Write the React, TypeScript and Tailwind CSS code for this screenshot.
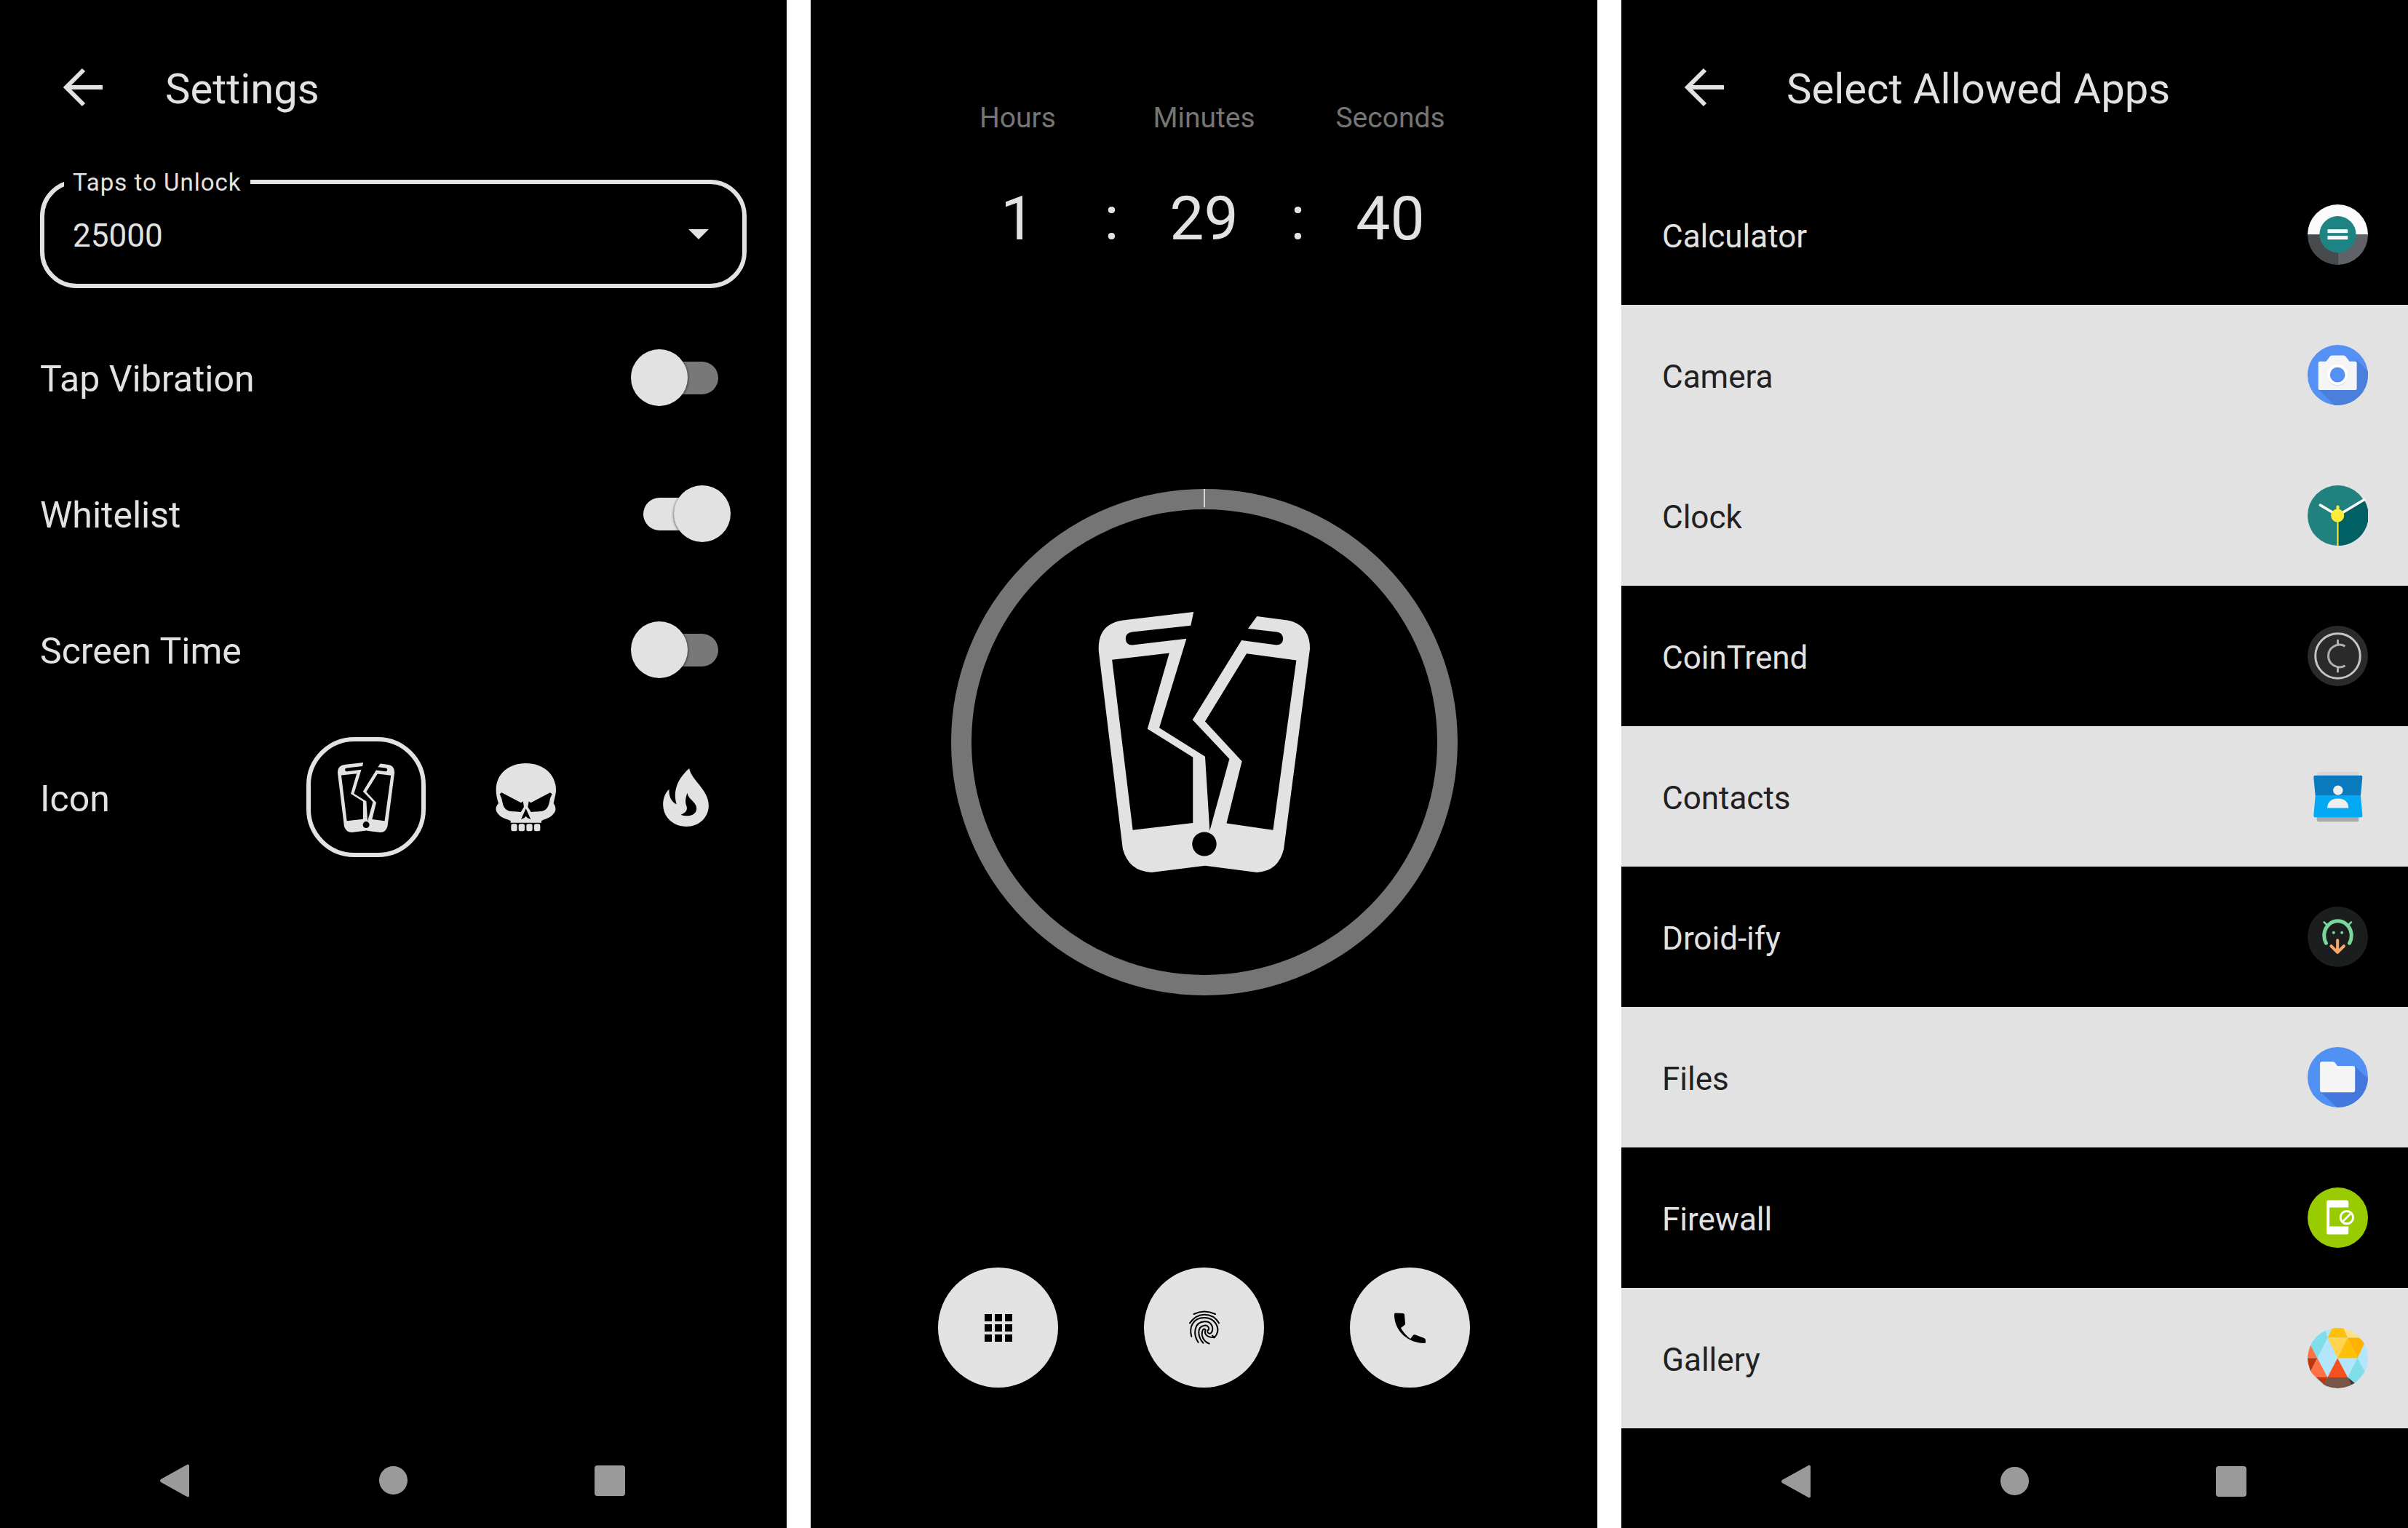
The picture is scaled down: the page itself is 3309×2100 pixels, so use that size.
import React from "react";

const font = { fontFamily: "Roboto, sans-serif" };

function BackArrow() {
  return (
    <svg width="54" height="54" viewBox="0 0 54 54" className="shrink-0">
      <path d="M54 27H7M28 3L4 27l24 24" fill="none" stroke="#e2e2e2" strokeWidth="6" />
    </svg>
  );
}

function NavBar() {
  return (
    <div className="h-[138px] relative">
      <div className="flex items-center h-[45px] mt-[50px]">
        <svg width="40" height="46" viewBox="0 0 40 46" className="ml-[220px] shrink-0">
          <path d="M38 0.5q2 0 2 2v41q0 2-2 2L1 25q-2-2 0-4z" fill="#9a9a9a" />
        </svg>
        <div className="ml-[261px] w-[39px] h-[39px] rounded-full bg-[#9a9a9a] shrink-0" />
        <div className="ml-[257px] w-[42px] h-[42px] rounded-[4px] bg-[#9a9a9a] shrink-0" />
      </div>
    </div>
  );
}

function Toggle({ on }: { on?: boolean }) {
  return (
    <div className={on ? "relative w-[120px] h-[78px] mr-[72px]" : "relative w-[120px] h-[78px] mr-[89px]"}>
      <div className={on ? "absolute left-0 top-[17px] w-[92px] h-[45px] rounded-full bg-[#e2e2e2]" : "absolute left-[28px] top-[17px] w-[92px] h-[45px] rounded-full bg-[#787878]"} />
      <div className={on ? "absolute right-0 top-0 w-[78px] h-[78px] rounded-full bg-[#e2e2e2] shadow-[-1px_1px_3px_rgba(0,0,0,0.45)]" : "absolute left-0 top-0 w-[78px] h-[78px] rounded-full bg-[#e2e2e2] shadow-[1px_1px_3px_rgba(0,0,0,0.45)]"} />
    </div>
  );
}

function Row({ label, on }: { label: string; on?: boolean }) {
  return (
    <div className="flex items-center justify-between h-[187px]">
      <span className="text-[50px] leading-none pt-[4px] text-[#e2e2e2]">{label}</span>
      <Toggle on={on} />
    </div>
  );
}

function BrokenPhone({ w, h }: { w: number; h: number }) {
  return (
    <svg width={w} height={h} viewBox="480 395 604 780" preserveAspectRatio="none">
      <path
        fillRule="evenodd"
        fill="#e2e2e2"
        d="M753 395L745 436L582 455Q563 457 563 475Q564 495 582 494L733 475L657 742L785 828L798 1050L853 835L750 718L887 480L985 494Q1003 493 1003 475Q1002 457 985 455L905 445L930 408L1015 420Q1078 432 1078 505L1005 1105Q990 1172 930 1175L785 1155L635 1175Q572 1172 555 1105L488 515Q482 432 555 420ZM525 538L685 518L624 745L751 830L751 1027L583 1048ZM901 520L1040 540L975 1048L845 1028L888 842L785 723Z"
      />
      <ellipse cx="783" cy="1090" rx="34" ry="36" fill="#000" />
    </svg>
  );
}

function Skull() {
  return (
    <svg width="85" height="94" viewBox="30 25 255 282">
      <path
        fill="#e2e2e2"
        d="M35 135C35 70 85 25 158 25C230 25 282 70 282 135C282 150 276 170 272 190C282 205 285 220 270 235C260 250 235 255 222 262V270H95V262C80 255 55 250 45 235C30 220 32 205 45 190C38 170 35 150 35 135Z"
      />
      <path
        fill="#000"
        d="M50 152L58 146L138 188L146 182L150 205L137 226C115 224 90 226 80 218C64 208 62 190 58 170ZM266 152L258 146L178 188L170 182L166 205L179 226C201 224 226 226 236 218C252 208 254 190 258 170ZM158 212L178 256L164 250L158 243L152 250L138 256Z"
      />
      <rect x="97" y="275" width="25" height="30" rx="7" fill="#e2e2e2" />
      <rect x="128" y="275" width="25" height="30" rx="7" fill="#e2e2e2" />
      <rect x="160" y="275" width="25" height="30" rx="7" fill="#e2e2e2" />
      <rect x="192" y="275" width="25" height="30" rx="7" fill="#e2e2e2" />
    </svg>
  );
}

function Flame() {
  return (
    <svg width="63" height="80" viewBox="722 42 188 240">
      <path
        fill="#e2e2e2"
        d="M830 42C838 90 910 130 910 195C910 245 870 282 818 282C765 282 722 245 722 190C722 165 732 140 747 128C745 155 755 180 778 190C765 150 770 95 830 42Z"
      />
      <path fill="#000" d="M822 143C825 170 862 180 860 210C858 235 825 245 795 233C815 225 825 215 818 195C812 180 815 160 822 143Z" />
    </svg>
  );
}

function Settings() {
  return (
    <div className="w-[1081px] h-[2100px] bg-black flex flex-col">
      <div className="flex items-center h-[240px] pl-[87px]">
        <BackArrow />
        <span className="ml-[86px] text-[58px] leading-none pt-[4px] text-[#e2e2e2]">Settings</span>
      </div>
      <div className="relative mx-[55px] h-[149px] mt-[7px] rounded-[50px] border-[6px] border-[#e2e2e2] flex items-center justify-between pl-[39px] pr-[46px]">
        <span className="absolute left-[27px] -top-[19px] bg-black px-[12px] text-[33px] leading-[34px] tracking-[1px] text-[#e2e2e2]">Taps to Unlock</span>
        <span className="text-[44px] leading-none pt-[4px] text-[#e2e2e2]">25000</span>
        <svg width="28" height="14" viewBox="0 0 28 14"><path d="M0 0h28L14 14z" fill="#e2e2e2" /></svg>
      </div>
      <div className="flex flex-col pl-[55px] pr-[5px] mt-[29px]">
        <Row label="Tap Vibration" />
        <Row label="Whitelist" on />
        <Row label="Screen Time" />
      </div>
      <div className="flex items-center pl-[55px] mt-[27px]">
        <span className="text-[50px] leading-none pt-[4px] text-[#e2e2e2] w-[366px]">Icon</span>
        <div className="w-[164px] h-[165px] rounded-[66px] border-[6px] border-[#e2e2e2] flex items-center justify-center">
          <BrokenPhone w={80} h={96} />
        </div>
        <div className="ml-[95px] shrink-0"><Skull /></div>
        <div className="ml-[146px] shrink-0"><Flame /></div>
      </div>
      <div className="flex-1" />
      <NavBar />
    </div>
  );
}

function Timer() {
  return (
    <div className="w-[1081px] h-[2100px] bg-black flex flex-col items-center">
      <div className="grid grid-cols-[256px_256px_256px] justify-center mt-[137px] text-center text-[39px] leading-[50px] text-[#757575]">
        <span>Hours</span>
        <span>Minutes</span>
        <span>Seconds</span>
      </div>
      <div className="grid grid-cols-[256px_256px_256px] justify-center mt-[64px] text-center text-[84px] leading-[100px] text-[#e2e2e2]">
        <div className="relative">1<span className="absolute right-[-11px] top-0">:</span></div>
        <div className="relative">29<span className="absolute right-[-11px] top-0">:</span></div>
        <div>40</div>
      </div>
      <div className="relative w-[696px] h-[696px] mt-[321px] rounded-full border-[28px] border-[#757575] flex items-center justify-center">
        <div className="absolute -top-[28px] left-[319px] w-[2px] h-[25px] bg-[#d8d8d8]" />
        <BrokenPhone w={297} h={358} />
      </div>
      <div className="flex gap-[118px] mt-[374px]">
        <div className="w-[165px] h-[165px] rounded-full bg-[#e2e2e2] flex items-center justify-center">
          <div className="grid grid-cols-[10px_10px_10px] auto-rows-[10px] gap-[4px]">
            {Array.from({ length: 9 }).map((_, i) => (
              <div key={i} className="bg-black" />
            ))}
          </div>
        </div>
        <div className="w-[165px] h-[165px] rounded-full bg-[#e2e2e2] flex items-center justify-center">
          <svg width="70" height="60" viewBox="0 0 210 180" fill="none" stroke="#000" strokeWidth="6" strokeLinecap="round">
            <path d="M62 33Q105 12 150 33" />
            <path d="M45 70Q70 35 105 35Q145 35 165 70" />
            <path d="M52 125C42 90 55 48 105 48C150 48 170 90 155 118C150 128 142 128 138 122" />
            <path d="M80 150C60 120 58 68 105 64C135 62 145 90 135 108C128 118 118 112 118 105" />
            <path d="M100 152C80 130 70 85 105 80C125 78 128 100 118 100" />
            <path d="M125 155C100 145 90 120 98 100C103 90 112 95 108 105C106 118 118 130 148 130" />
          </svg>
        </div>
        <div className="w-[165px] h-[165px] rounded-full bg-[#e2e2e2] flex items-center justify-center">
          <svg width="43" height="42" viewBox="0 0 43 42">
            <path d="M1 0.5L12 1Q14 1 14 3L15 15Q15 17 13 18L9 21C12 27 17 32 22 36L26 31Q27 30 29 30.5L41 35Q43 36 43 38V41Q43 42 41 42C20 42 0 26 0 3Q0 0.5 1 0.5Z" fill="#000" />
          </svg>
        </div>
      </div>
      <div className="flex-1" />
    </div>
  );
}

const I = ({ children }: { children: React.ReactNode }) => (
  <svg width="83" height="83" viewBox="0 0 248 248" className="shrink-0">
    {children}
  </svg>
);

const CalcIcon = () => (
  <I>
    <path d="M0 124A124 124 0 0 1 248 124Z" fill="#fafafa" />
    <path d="M0 124A124 124 0 0 0 124 248V124Z" fill="#474b4e" />
    <path d="M248 124A124 124 0 0 1 124 248V124Z" fill="#5f6368" />
    <circle cx="124" cy="123" r="75" fill="#1d8383" />
    <rect x="82" y="102" width="83" height="15" fill="#fafafa" />
    <rect x="82" y="129" width="83" height="15" fill="#fafafa" />
  </I>
);
const CameraIcon = () => (
  <I>
    <circle cx="124" cy="124" r="124" fill="#5591f5" />
    <path d="M202 62L248 108V124A124 124 0 0 1 124 248H110L44 182Z" fill="#4a7fdc" />
    <path d="M50 68H76L92 47Q96 43 102 43H146Q152 43 156 47L172 68H196Q202 68 202 74V179Q202 185 196 185H50Q44 185 44 179V74Q44 68 50 68Z" fill="#f5f5f5" />
    <circle cx="123" cy="126" r="42" fill="#dcdcdc" />
    <circle cx="123" cy="123" r="42" fill="#fff" />
    <circle cx="123" cy="123" r="31" fill="#5591f5" />
  </I>
);
const ClockIcon = () => (
  <I>
    <circle cx="124" cy="124" r="124" fill="#21817f" />
    <path d="M124 124L232 59A124 124 0 0 1 124 248Z" fill="#006064" />
    <path d="M124 124L232 59M124 124L52 81" stroke="#fafafa" strokeWidth="11" strokeLinecap="round" />
    <rect x="121" y="124" width="6" height="124" fill="#ffeb3b" />
    <rect x="118" y="82" width="12" height="40" rx="5" fill="#ffeb3b" />
    <circle cx="123" cy="124" r="27" fill="#ffeb3b" />
  </I>
);
const CoinIcon = () => (
  <I>
    <circle cx="124" cy="124" r="124" fill="#2a2a2a" />
    <circle cx="124" cy="124" r="92" fill="none" stroke="#c4c4c4" strokeWidth="9" />
    <path d="M154 84A46 46 0 1 0 154 164" fill="none" stroke="#b0b0b0" strokeWidth="9" />
    <path d="M124 60V78M124 170V188" stroke="#b0b0b0" strokeWidth="9" strokeLinecap="round" />
  </I>
);
const ContactsIcon = () => (
  <I>
    <rect x="40" y="23" width="170" height="30" rx="8" fill="#d6d6d6" />
    <rect x="38" y="190" width="172" height="38" rx="8" fill="#a9a9a9" />
    <path d="M32 38H218Q226 38 225 46L218 122H32L25 46Q24 38 32 38Z" fill="#0a7abf" />
    <path d="M32 122H218L225 200Q226 210 218 210H32Q24 210 25 200Z" fill="#04a9f4" />
    <ellipse cx="125" cy="99" rx="20" ry="20" fill="#eee" />
    <path d="M81 172C81 146 100 133 125 133C150 133 168 146 168 172Z" fill="#eee" />
  </I>
);
const DroidIcon = () => (
  <I>
    <circle cx="124" cy="124" r="124" fill="#1c1e1e" />
    <path d="M76 150A56 60 0 1 1 172 150" fill="none" stroke="#78d89c" strokeWidth="15" strokeLinecap="round" />
    <path d="M68 64L82 78M179 64L165 78" stroke="#78d89c" strokeWidth="8" strokeLinecap="round" />
    <circle cx="107" cy="107" r="6" fill="#78d89c" />
    <circle cx="141" cy="107" r="6" fill="#78d89c" />
    <path d="M123 138V188M97 162L123 188L149 162" fill="none" stroke="#f5a96a" strokeWidth="12" strokeLinecap="round" strokeLinejoin="round" />
  </I>
);
const FilesIcon = () => (
  <I>
    <circle cx="124" cy="124" r="124" fill="#5191f4" />
    <path d="M195 80L248 130A124 124 0 0 1 120 248L50 180Z" fill="#4478dc" />
    <path d="M60 60H104Q110 60 114 66L122 78H186Q195 78 195 87V177Q195 186 186 186H60Q51 186 51 177V69Q51 60 60 60Z" fill="#f5f5f5" />
  </I>
);
const FirewallIcon = () => (
  <I>
    <circle cx="124" cy="124" r="124" fill="#98cb00" />
    <path d="M86 52H160Q168 52 168 60V82H90V160H168V185Q168 193 160 193H86Q78 193 78 185V60Q78 52 86 52Z" fill="#fff" />
    <circle cx="161" cy="123" r="26" fill="#98cb00" stroke="#fff" strokeWidth="9" />
    <path d="M146 138L176 108" stroke="#fff" strokeWidth="8" />
  </I>
);
const GalleryIcon = () => (
  <I>
    <defs>
      <clipPath id="gal"><circle cx="124" cy="124" r="124" /></clipPath>
    </defs>
    <g clipPath="url(#gal)">
      <rect width="248" height="248" fill="#b3e5fc" />
      <path d="M82 40L40 124L0 50L70 0Z" fill="#80deea" />
      <path d="M82 40L102 0H147L165 40Z" fill="#ffc107" />
      <path d="M147 0L248 0L235 60L210 40H165Z" fill="#ffe082" />
      <path d="M82 40H165L123 124Z" fill="#ffd54f" />
      <path d="M165 40L123 124H205Z" fill="#ffc107" />
      <path d="M165 40H210L235 60L205 124Z" fill="#ffb300" />
      <path d="M205 124L235 180L180 248L165 203Z" fill="#80deea" />
      <path d="M123 124L82 203H165Z" fill="#f4511e" />
      <path d="M82 203H165L185 248H60Z" fill="#795548" />
      <path d="M82 203L60 248L30 220L68 233Z" fill="#4e342e" />
      <path d="M165 203L185 248L210 240Z" fill="#4e342e" />
      <path d="M12 71L40 124H-4Z" fill="#ff7043" />
      <path d="M-4 124H40L12 180Z" fill="#bf360c" />
      <path d="M40 124L82 203H35L12 180Z" fill="#ff7043" />
      <path d="M35 203H82L68 233Z" fill="#bf360c" />
    </g>
  </I>
);

const apps: { name: string; light: boolean; icon: React.ReactNode }[] = [
  { name: "Calculator", light: false, icon: <CalcIcon /> },
  { name: "Camera", light: true, icon: <CameraIcon /> },
  { name: "Clock", light: true, icon: <ClockIcon /> },
  { name: "CoinTrend", light: false, icon: <CoinIcon /> },
  { name: "Contacts", light: true, icon: <ContactsIcon /> },
  { name: "Droid-ify", light: false, icon: <DroidIcon /> },
  { name: "Files", light: true, icon: <FilesIcon /> },
  { name: "Firewall", light: false, icon: <FirewallIcon /> },
  { name: "Gallery", light: true, icon: <GalleryIcon /> },
];

function Allowed() {
  return (
    <div className="w-[1081px] h-[2100px] bg-black flex flex-col">
      <div className="flex items-center h-[240px] pl-[87px] shrink-0">
        <BackArrow />
        <span className="ml-[86px] text-[58px] leading-none pt-[4px] text-[#e2e2e2]">Select Allowed Apps</span>
      </div>
      <div className="-mt-[14px]">
        {apps.map((a) => (
          <div
            key={a.name}
            className={a.light ? "h-[193px] flex items-center justify-between pl-[56px] pr-[55px] bg-[#e2e2e2] text-[#212121]" : "h-[193px] flex items-center justify-between pl-[56px] pr-[55px] bg-black text-[#e2e2e2]"}
          >
            <span className="text-[44px] leading-none pt-[4px]">{a.name}</span>
            {a.icon}
          </div>
        ))}
      </div>
      <div className="flex-1" />
      <NavBar />
    </div>
  );
}

export default function App() {
  return (
    <div className="w-[3309px] h-[2100px] bg-white flex justify-between overflow-hidden" style={font}>
      <Settings />
      <Timer />
      <Allowed />
    </div>
  );
}
